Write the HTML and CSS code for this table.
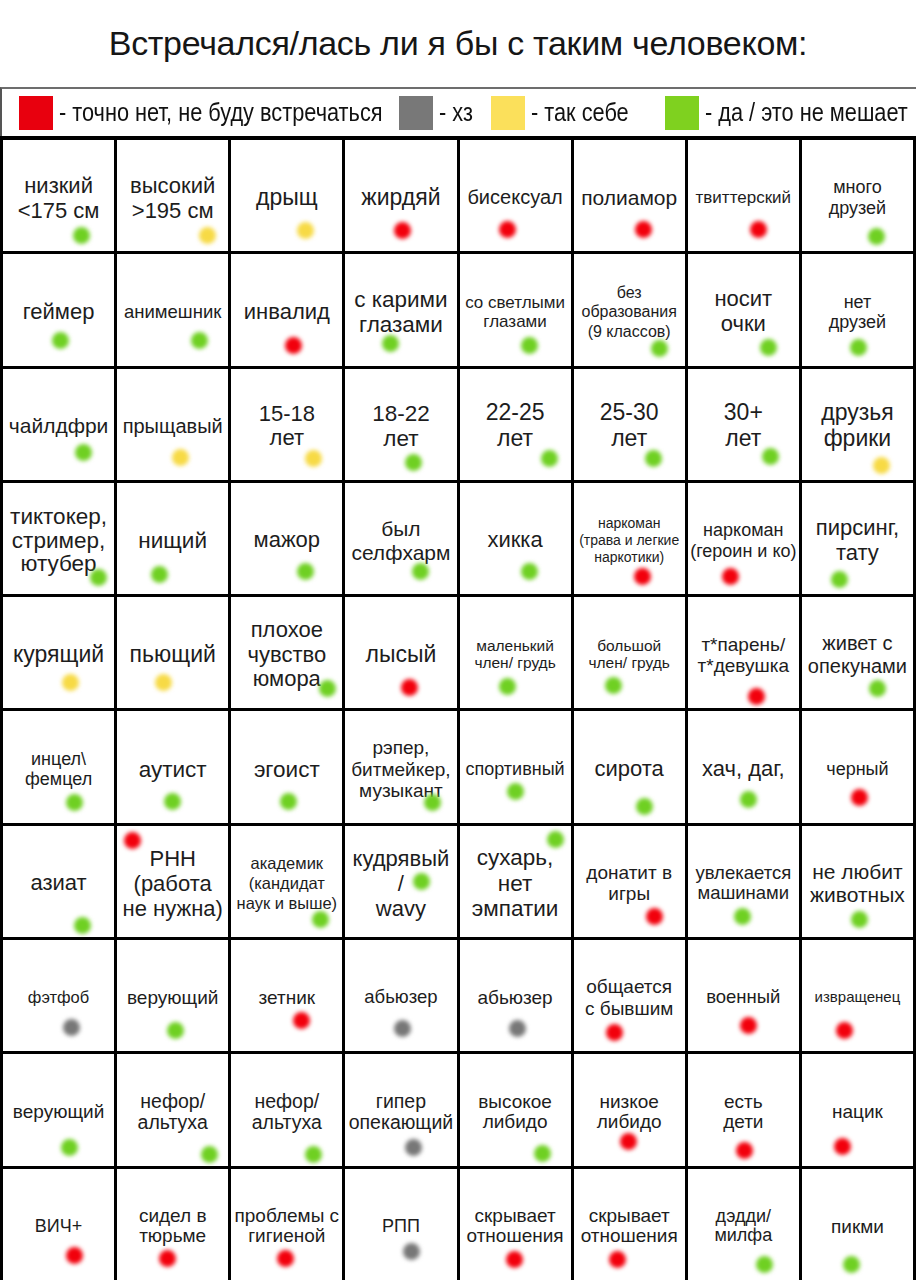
FILE: index.html
```html
<!DOCTYPE html>
<html lang="ru">
<head>
<meta charset="utf-8">
<title>Встречался/лась ли я бы с таким человеком</title>
<link rel="stylesheet" href="styles.css">
</head>
<body>
<div class="page">
  <h1 class="title">Встречался/лась ли я бы с таким человеком:</h1>
  <div class="legend">
    <div class="legend-item item-red"><span class="swatch red"></span><span class="legend-text">- точно нет, не буду встречаться</span></div>
    <div class="legend-item item-gray"><span class="swatch gray"></span><span class="legend-text">- хз</span></div>
    <div class="legend-item item-yellow"><span class="swatch yellow"></span><span class="legend-text">- так себе</span></div>
    <div class="legend-item item-green"><span class="swatch green"></span><span class="legend-text">- да / это не мешает</span></div>
  </div>
  <div class="grid">
    <div class="cell f22 lh-a"><span>низкий<br>&lt;175 см</span><i class="dot g" style="--x:78px;--y:95px"></i></div>
    <div class="cell f22 lh-a"><span>высокий<br>&gt;195 см</span><i class="dot y" style="--x:90px;--y:95px"></i></div>
    <div class="cell f23"><span>дрыщ</span><i class="dot y" style="--x:74px;--y:90px"></i></div>
    <div class="cell f23"><span>жирдяй</span><i class="dot r" style="--x:57px;--y:90px"></i></div>
    <div class="cell f20"><span>бисексуал</span><i class="dot r" style="--x:48px;--y:89px"></i></div>
    <div class="cell f21"><span>полиамор</span><i class="dot r" style="--x:70px;--y:89px"></i></div>
    <div class="cell f17"><span>твиттерский</span><i class="dot r" style="--x:71px;--y:89px"></i></div>
    <div class="cell f18"><span>много<br>друзей</span><i class="dot g" style="--x:75px;--y:96px"></i></div>

    <div class="cell f22"><span>геймер</span><i class="dot g" style="--x:57px;--y:86px"></i></div>
    <div class="cell f185"><span>анимешник</span><i class="dot g" style="--x:82px;--y:86px"></i></div>
    <div class="cell f22"><span>инвалид</span><i class="dot r" style="--x:62px;--y:91px"></i></div>
    <div class="cell f225"><span>с карими<br>глазами</span><i class="dot g" style="--x:45px;--y:89px"></i></div>
    <div class="cell f17"><span>со светлыми<br>глазами</span><i class="dot g" style="--x:70px;--y:91px"></i></div>
    <div class="cell f16 lh-b"><span>без<br>образования<br>(9 классов)</span><i class="dot g" style="--x:86px;--y:94px"></i></div>
    <div class="cell f22"><span>носит<br>очки</span><i class="dot g" style="--x:81px;--y:93px"></i></div>
    <div class="cell f18"><span>нет<br>друзей</span><i class="dot g" style="--x:57px;--y:93px"></i></div>

    <div class="cell f21"><span>чайлдфри</span><i class="dot g" style="--x:80px;--y:84px"></i></div>
    <div class="cell f20"><span>прыщавый</span><i class="dot y" style="--x:63px;--y:89px"></i></div>
    <div class="cell f22"><span>15-18<br>лет</span><i class="dot y" style="--x:82px;--y:90px"></i></div>
    <div class="cell f225"><span>18-22<br>лет</span><i class="dot g" style="--x:68px;--y:94px"></i></div>
    <div class="cell f23"><span>22-25<br>лет</span><i class="dot g" style="--x:90px;--y:90px"></i></div>
    <div class="cell f23"><span>25-30<br>лет</span><i class="dot g" style="--x:80px;--y:90px"></i></div>
    <div class="cell f23"><span>30+<br>лет</span><i class="dot g" style="--x:83px;--y:88px"></i></div>
    <div class="cell f23"><span>друзья<br>фрики</span><i class="dot y" style="--x:80px;--y:97px"></i></div>

    <div class="cell f225 lh-c"><span>тиктокер,<br>стример,<br>ютубер</span><i class="dot g" style="--x:95px;--y:95px"></i></div>
    <div class="cell f225"><span>нищий</span><i class="dot g" style="--x:42px;--y:92px"></i></div>
    <div class="cell f22"><span>мажор</span><i class="dot g" style="--x:74px;--y:89px"></i></div>
    <div class="cell f21"><span>был<br>селфхарм</span><i class="dot g" style="--x:75px;--y:89px"></i></div>
    <div class="cell f22"><span>хикка</span><i class="dot g" style="--x:70px;--y:89px"></i></div>
    <div class="cell f14 lh-b"><span>наркоман<br>(трава и легкие<br>наркотики)</span><i class="dot r" style="--x:69px;--y:94px"></i></div>
    <div class="cell f18"><span>наркоман<br>(героин и ко)</span><i class="dot r" style="--x:43px;--y:94px"></i></div>
    <div class="cell f22"><span>пирсинг,<br>тату</span><i class="dot g" style="--x:38px;--y:97px"></i></div>

    <div class="cell f23"><span>курящий</span><i class="dot y" style="--x:67px;--y:85px"></i></div>
    <div class="cell f23"><span>пьющий</span><i class="dot y" style="--x:46px;--y:85px"></i></div>
    <div class="cell f22"><span>плохое<br>чувство<br>юмора</span><i class="dot g" style="--x:96px;--y:91px"></i></div>
    <div class="cell f23"><span>лысый</span><i class="dot r" style="--x:64px;--y:90px"></i></div>
    <div class="cell f155 lh-c"><span>маленький<br>член/ грудь</span><i class="dot g" style="--x:48px;--y:89px"></i></div>
    <div class="cell f155 lh-c"><span>большой<br>член/ грудь</span><i class="dot g" style="--x:40px;--y:88px"></i></div>
    <div class="cell f19"><span>т*парень/<br>т*девушка</span><i class="dot r" style="--x:69px;--y:99px"></i></div>
    <div class="cell f20"><span>живет с<br>опекунами</span><i class="dot g" style="--x:76px;--y:91px"></i></div>

    <div class="cell f18"><span>инцел\<br>фемцел</span><i class="dot g" style="--x:71px;--y:91px"></i></div>
    <div class="cell f225"><span>аутист</span><i class="dot g" style="--x:55px;--y:90px"></i></div>
    <div class="cell f225"><span>эгоист</span><i class="dot g" style="--x:57px;--y:90px"></i></div>
    <div class="cell f19"><span>рэпер,<br>битмейкер,<br>музыкант</span><i class="dot g" style="--x:87px;--y:91px"></i></div>
    <div class="cell f18"><span>спортивный</span><i class="dot g" style="--x:56px;--y:80px"></i></div>
    <div class="cell f22"><span>сирота</span><i class="dot g" style="--x:71px;--y:95px"></i></div>
    <div class="cell f22"><span>хач, даг,</span><i class="dot g" style="--x:61px;--y:88px"></i></div>
    <div class="cell f18"><span>черный</span><i class="dot r" style="--x:58px;--y:86px"></i></div>

    <div class="cell f22"><span>азиат</span><i class="dot g" style="--x:79px;--y:100px"></i></div>
    <div class="cell f22 lh-a"><span>РНН<br>(работа<br>не нужна)</span><i class="dot r" style="--x:15px;--y:15px"></i></div>
    <div class="cell f165 lh-b"><span>академик<br>(кандидат<br>наук и выше)</span><i class="dot g" style="--x:89px;--y:94px"></i></div>
    <div class="cell f22 lh-a"><span>кудрявый<br>/<br>wavy</span><i class="dot g" style="--x:76px;--y:56px"></i></div>
    <div class="cell f225 lh-a"><span>сухарь,<br>нет<br>эмпатии</span><i class="dot g" style="--x:96px;--y:14px"></i></div>
    <div class="cell f19"><span>донатит в<br>игры</span><i class="dot r" style="--x:81px;--y:91px"></i></div>
    <div class="cell f185"><span>увлекается<br>машинами</span><i class="dot g" style="--x:55px;--y:91px"></i></div>
    <div class="cell f21"><span>не любит<br>животных</span><i class="dot g" style="--x:58px;--y:94px"></i></div>

    <div class="cell f165"><span>фэтфоб</span><i class="dot k" style="--x:68px;--y:87px"></i></div>
    <div class="cell f19"><span>верующий</span><i class="dot g" style="--x:58px;--y:90px"></i></div>
    <div class="cell f19"><span>зетник</span><i class="dot r" style="--x:70px;--y:80px"></i></div>
    <div class="cell f185"><span>абьюзер</span><i class="dot k" style="--x:57px;--y:88px"></i></div>
    <div class="cell f19"><span>абьюзер</span><i class="dot k" style="--x:58px;--y:88px"></i></div>
    <div class="cell f19"><span>общается<br>с бывшим</span><i class="dot r" style="--x:41px;--y:92px"></i></div>
    <div class="cell f185"><span>военный</span><i class="dot r" style="--x:61px;--y:85px"></i></div>
    <div class="cell f15"><span>извращенец</span><i class="dot r" style="--x:43px;--y:90px"></i></div>

    <div class="cell f19"><span>верующий</span><i class="dot g" style="--x:66px;--y:93px"></i></div>
    <div class="cell f195 lh-c"><span>нефор/<br>альтуха</span><i class="dot g" style="--x:92px;--y:100px"></i></div>
    <div class="cell f195 lh-c"><span>нефор/<br>альтуха</span><i class="dot g" style="--x:82px;--y:100px"></i></div>
    <div class="cell f195 lh-c"><span>гипер<br>опекающий</span><i class="dot k" style="--x:68px;--y:93px"></i></div>
    <div class="cell f19 lh-c"><span>высокое<br>либидо</span><i class="dot g" style="--x:83px;--y:99px"></i></div>
    <div class="cell f19 lh-c"><span>низкое<br>либидо</span><i class="dot r" style="--x:55px;--y:87px"></i></div>
    <div class="cell f19 lh-c"><span>есть<br>дети</span><i class="dot r" style="--x:57px;--y:96px"></i></div>
    <div class="cell f19"><span>нацик</span><i class="dot r" style="--x:41px;--y:92px"></i></div>

    <div class="cell f18"><span>ВИЧ+</span><i class="dot r" style="--x:71px;--y:87px"></i></div>
    <div class="cell f19 lh-c"><span>сидел в<br>тюрьме</span><i class="dot r" style="--x:50px;--y:90px"></i></div>
    <div class="cell f19 lh-c"><span>проблемы с<br>гигиеной</span><i class="dot r" style="--x:54px;--y:90px"></i></div>
    <div class="cell f18"><span>РПП</span><i class="dot k" style="--x:66px;--y:83px"></i></div>
    <div class="cell f19 lh-c"><span>скрывает<br>отношения</span><i class="dot r" style="--x:55px;--y:91px"></i></div>
    <div class="cell f19 lh-c"><span>скрывает<br>отношения</span><i class="dot r" style="--x:44px;--y:91px"></i></div>
    <div class="cell f18 lh-c"><span>дэдди/<br>милфа</span><i class="dot g" style="--x:77px;--y:96px"></i></div>
    <div class="cell f19"><span>пикми</span><i class="dot g" style="--x:50px;--y:96px"></i></div>
  </div>
</div>
</body>
</html>
```
FILE: styles.css
```css
* { box-sizing: border-box; }
html, body { margin: 0; padding: 0; background: #fff; }
body {
  width: 916px;
  height: 1280px;
  overflow: hidden;
  font-family: "Liberation Sans", Arial, sans-serif;
  color: #1c1c1c;
}
.page { width: 916px; }

.title {
  margin: 0;
  height: 87px;
  display: flex;
  align-items: center;
  justify-content: center;
  font-weight: normal;
  font-size: 34px;
  color: #161616;
  letter-spacing: -0.3px;
}

.legend {
  height: 49px;
  border-top: 2px solid #6d6d6d;
  border-left: 2px solid #555;
  display: flex;
  align-items: center;
  padding-left: 17px;
  font-size: 25px;
  color: #111;
}
.legend-item { flex: none; display: flex; align-items: center; gap: 6px; }
.item-red { width: 365px; }
.item-gray { width: 79px; margin-left: 15px; }
.item-yellow { width: 141px; margin-left: 13px; }
.item-green { width: 247px; margin-left: 33px; }
.swatch { flex: none; display: block; width: 34px; height: 34px; }
.swatch.red { background: #e8000e; }
.swatch.gray { background: #787878; }
.swatch.yellow { background: #fbe05b; }
.swatch.green { background: #7fd11f; }
.legend-text {
  flex: none;
  display: inline-block;
  white-space: nowrap;
  transform: scaleX(0.87);
  transform-origin: left center;
}

.grid {
  display: grid;
  grid-template-columns: repeat(8, 1fr);
  grid-auto-rows: 111.3px;
  gap: 3px;
  padding: 0 3px 3px 3px;
  border-top: 4px solid #000;
  background: #000;
  width: 916px;
}
.cell {
  position: relative;
  background: #fff;
  display: flex;
  align-items: center;
  justify-content: center;
  text-align: center;
  padding-top: 4px;
  line-height: 1.12;
  color: #1d1d1d;
}
.cell span { white-space: nowrap; }
.lh-a { line-height: 1.14; }
.lh-b { line-height: 1.22; }
.lh-c { line-height: 1.06; }

.f23 { font-size: 23px; }
.f225 { font-size: 22.5px; }
.f22 { font-size: 22px; }
.f21 { font-size: 21px; }
.f20 { font-size: 20px; }
.f195 { font-size: 19.5px; }
.f19 { font-size: 19px; }
.f185 { font-size: 18.5px; }
.f18 { font-size: 18px; }
.f17 { font-size: 17px; }
.f165 { font-size: 16.5px; }
.f16 { font-size: 16px; }
.f155 { font-size: 15.5px; }
.f15 { font-size: 15px; }
.f14 { font-size: 14px; }

.dot {
  position: absolute;
  left: var(--x);
  top: var(--y);
  width: 17px;
  height: 17px;
  margin: -8.5px 0 0 -8.5px;
  border-radius: 50%;
  filter: blur(1.9px);
}
.dot.g { background: #6fd022; }
.dot.r { background: #f2000c; }
.dot.y { background: #f7da45; }
.dot.k { background: #777; }
```
